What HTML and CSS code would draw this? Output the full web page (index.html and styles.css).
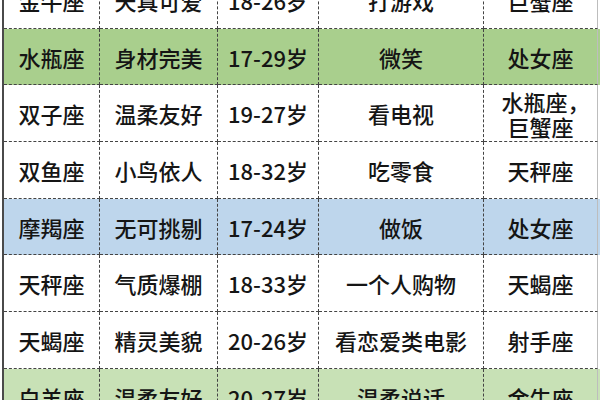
FILE: index.html
```html
<!DOCTYPE html>
<html lang="zh">
<head>
<meta charset="utf-8">
<link rel="stylesheet" href="styles.css">
</head>
<body>
<div class="sheet">
  <div class="row">
    <div class="cell">金牛座</div><div class="cell">天真可爱</div><div class="cell">18-26岁</div><div class="cell">打游戏</div><div class="cell">巨蟹座</div>
  </div>
  <div class="row green">
    <div class="cell">水瓶座</div><div class="cell">身材完美</div><div class="cell">17-29岁</div><div class="cell">微笑</div><div class="cell">处女座</div>
  </div>
  <div class="row">
    <div class="cell">双子座</div><div class="cell">温柔友好</div><div class="cell">19-27岁</div><div class="cell">看电视</div><div class="cell two"><span class="stack"><span class="line">水瓶座<span class="comma">，</span></span><span class="line">巨蟹座</span></span></div>
  </div>
  <div class="row">
    <div class="cell">双鱼座</div><div class="cell">小鸟依人</div><div class="cell">18-32岁</div><div class="cell">吃零食</div><div class="cell">天秤座</div>
  </div>
  <div class="row blue">
    <div class="cell">摩羯座</div><div class="cell">无可挑剔</div><div class="cell">17-24岁</div><div class="cell">做饭</div><div class="cell">处女座</div>
  </div>
  <div class="row">
    <div class="cell">天秤座</div><div class="cell">气质爆棚</div><div class="cell">18-33岁</div><div class="cell">一个人购物</div><div class="cell">天蝎座</div>
  </div>
  <div class="row">
    <div class="cell">天蝎座</div><div class="cell">精灵美貌</div><div class="cell">20-26岁</div><div class="cell">看恋爱类电影</div><div class="cell">射手座</div>
  </div>
  <div class="row light">
    <div class="cell">白羊座</div><div class="cell">温柔友好</div><div class="cell">20-27岁</div><div class="cell">温柔说话</div><div class="cell">金牛座</div>
  </div>
</div>
</body>
</html>
```

FILE: styles.css
```css
html, body {
  margin: 0;
  padding: 0;
  background: #ffffff;
  overflow: hidden;
  width: 600px;
  height: 400px;
}

.sheet {
  margin-top: -28px;
  margin-left: 2px;
  width: 596px;
  border-left: 2px solid #4a4a4a;
  font-family: "Noto Sans CJK SC", "Noto Sans", sans-serif;
  font-size: 22px;
  font-weight: 500;
  color: #151515;
}

.row {
  display: grid;
  grid-template-columns: 96px 118px 101px 165px 114px;
  height: 56.7px;
  background: #ffffff;
}

.row.green { background: #a9cf8d; }
.row.blue { background: #bed6ec; }
.row.light { background: #c8e1b6; }

.cell {
  box-sizing: border-box;
  border-right: 1px dashed #444444;
  border-bottom: 1px dashed #444444;
  display: flex;
  align-items: center;
  justify-content: center;
  text-align: center;
  white-space: nowrap;
}

.cell:last-child {
  border-right: 1px solid #bdbdbd;
}

.stack {
  display: flex;
  flex-direction: column;
  align-items: center;
  line-height: 25px;
  padding-top: 2px;
}

.line {
  display: block;
}

.comma {
  margin-right: -10px;
}
```
